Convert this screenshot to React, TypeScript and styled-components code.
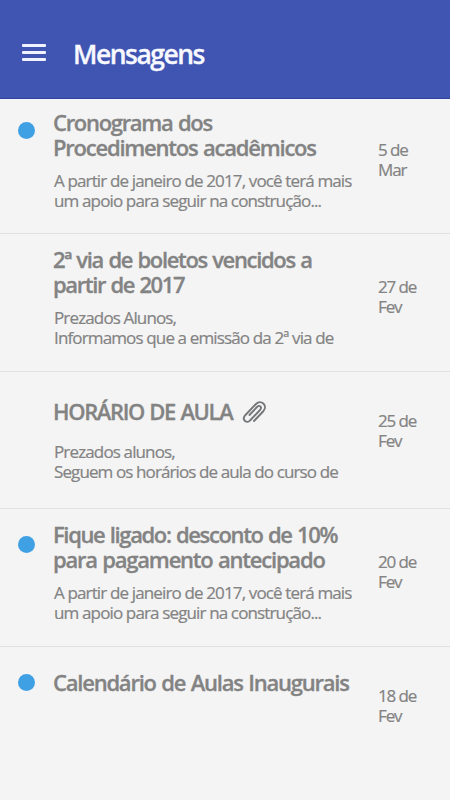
import React from 'react';
import styled, { createGlobalStyle } from 'styled-components';

const GlobalStyle = createGlobalStyle`
  * { box-sizing: border-box; }
  body { margin: 0; background: #f4f4f4; font-family: 'Open Sans', 'Noto Sans', sans-serif; }
`;

const Screen = styled.div`
  width: 450px;
  height: 800px;
  overflow: hidden;
  background: #f4f4f4;
  color: #838383;
`;

const Header = styled.header`
  display: flex;
  align-items: center;
  height: 99px;
  padding: 8px 22px 0;
  gap: 28px;
  background: #4054b2;
  border-bottom: 1px solid #3042a0;
`;

const MenuButton = styled.button`
  display: flex;
  flex-direction: column;
  justify-content: space-between;
  width: 24px;
  height: 17px;
  margin: 0 0 2px;
  padding: 0;
  border: 0;
  background: none;
`;

const MenuBar = styled.span`
  height: 3px;
  border-radius: 1px;
  background: #f0f2ff;
`;

const PageTitle = styled.h1`
  margin: 1px 0 0 -1px;
  color: #f8f9ff;
  font-size: 26.5px;
  font-weight: 600;
  letter-spacing: -1.5px;
  line-height: 36px;
  -webkit-text-stroke: 0.3px currentColor;
`;

const Row = styled.article<{ $height: number; $top: number; $last?: boolean }>`
  display: grid;
  grid-template-columns: 53px 325px 1fr;
  align-items: start;
  height: ${(p) => p.$height}px;
  padding-top: ${(p) => p.$top}px;
  border-bottom: ${(p) => (p.$last ? 'none' : '1px solid #e0e0e0')};
`;

const Unread = styled.span<{ $top: number }>`
  width: 17px;
  height: 17px;
  margin: ${(p) => p.$top}px 0 0 18px;
  border-radius: 50%;
  background: #3fa0e4;
`;

const Content = styled.div`
  grid-column: 2;
`;

const Subject = styled.h2`
  display: flex;
  align-items: center;
  gap: 10px;
  margin: 0;
  font-size: 22px;
  font-weight: 600;
  line-height: 25px;
  letter-spacing: -1.3px;
  word-spacing: 1px;
  white-space: nowrap;
  -webkit-text-stroke: 0.3px currentColor;
`;

const Preview = styled.p<{ $gap: number }>`
  margin: ${(p) => p.$gap}px 0 0 1px;
  font-size: 17px;
  line-height: 20.4px;
  letter-spacing: -0.86px;
  white-space: nowrap;
  -webkit-text-stroke: 0.2px currentColor;
`;

const DateLabel = styled.time<{ $top: number }>`
  grid-column: 3;
  margin-top: ${(p) => p.$top}px;
  font-size: 17px;
  line-height: 20.4px;
  letter-spacing: -1.1px;
  -webkit-text-stroke: 0.2px currentColor;
`;

const Line = styled.span<{ $spacing?: number }>`
  display: block;
  letter-spacing: ${(p) => (p.$spacing === undefined ? 'inherit' : `${p.$spacing}px`)};
`;

interface TextLine { text: string; spacing?: number }
interface Message {
  height: number; top: number; dot?: number; dateTop: number; gap: number;
  subject: TextLine[]; preview: TextLine[]; date: string[]; attachment?: boolean;
}

const messages: Message[] = [
  { height: 135, top: 11, dot: 12, dateTop: 30, gap: 11,
    subject: [{ text: 'Cronograma dos' }, { text: 'Procedimentos acadêmicos', spacing: -1.22 }],
    preview: [{ text: 'A partir de janeiro de 2017, você terá mais' }, { text: 'um apoio para seguir na construção...' }], date: ['5 de', 'Mar'] },
  { height: 138, top: 13, dateTop: 30, gap: 10.6,
    subject: [{ text: '2ª via de boletos vencidos a', spacing: -1.34 }, { text: 'partir de 2017', spacing: -1.37 }],
    preview: [{ text: 'Prezados Alunos,' }, { text: 'Informamos que a emissão da 2ª via de' }], date: ['27 de', 'Fev'] },
  { height: 137, top: 27, dateTop: 12, gap: 18, attachment: true,
    subject: [{ text: 'HORÁRIO DE AULA', spacing: -1.36 }],
    preview: [{ text: 'Prezados alunos,' }, { text: 'Seguem os horários de aula do curso de', spacing: -0.89 }], date: ['25 de', 'Fev'] },
  { height: 138, top: 13, dot: 14, dateTop: 30, gap: 10.6,
    subject: [{ text: 'Fique ligado: desconto de 10%', spacing: -1.36 }, { text: 'para pagamento antecipado', spacing: -1.22 }],
    preview: [{ text: 'A partir de janeiro de 2017, você terá mais' }, { text: 'um apoio para seguir na construção...' }], date: ['20 de', 'Fev'] },
  { height: 153, top: 23, dot: 4, dateTop: 16, gap: 0,
    subject: [{ text: 'Calendário de Aulas Inaugurais', spacing: -1.22 }], preview: [], date: ['18 de', 'Fev'] },
];

const AttachmentIcon = () => (
  <svg width="25" height="24" viewBox="0 0 25 24" fill="none" stroke="#747779" strokeWidth="1.9" strokeLinecap="round" strokeLinejoin="round" aria-label="Anexo">
    <path d="M12 21 21.5 11C26 5.5 19-1 14 4L3 15.5C-.5 20 5 24 8 20.5L18 10C20.5 7 17.5 4.5 15 7L7.5 15" />
  </svg>
);

export default function App() {
  return (
    <>
      <GlobalStyle />
      <Screen>
        <Header>
          <MenuButton aria-label="Menu"><MenuBar /><MenuBar /><MenuBar /></MenuButton>
          <PageTitle>Mensagens</PageTitle>
        </Header>
        <main>
          {messages.map((m, i) => (
            <Row key={i} $height={m.height} $top={m.top} $last={i === messages.length - 1}>
              {m.dot !== undefined && <Unread $top={m.dot} />}
              <Content>
                <Subject>
                  <span>{m.subject.map((l) => <Line key={l.text} $spacing={l.spacing}>{l.text}</Line>)}</span>
                  {m.attachment && <AttachmentIcon />}
                </Subject>
                {m.preview.length > 0 && (
                  <Preview $gap={m.gap}>{m.preview.map((l) => <Line key={l.text} $spacing={l.spacing}>{l.text}</Line>)}</Preview>
                )}
              </Content>
              <DateLabel $top={m.dateTop}>{m.date.map((l) => <Line key={l}>{l}</Line>)}</DateLabel>
            </Row>
          ))}
        </main>
      </Screen>
    </>
  );
}
